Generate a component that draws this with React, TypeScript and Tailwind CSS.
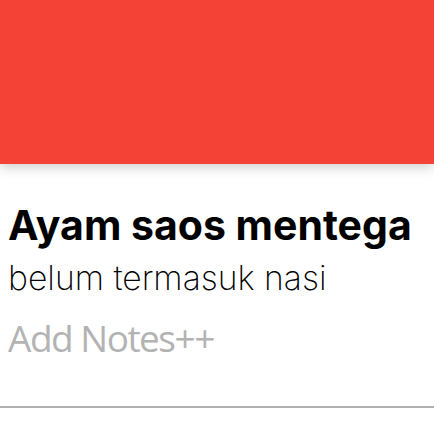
export default function App() {
  return (
    <div className="w-[434px] h-[434px] bg-white overflow-hidden">
      <div className="h-[164px] bg-[#f44336] shadow-[0_3px_12px_rgba(0,0,0,0.2)] relative z-10" />
      <div className="px-2">
        <h1 className="mt-[41px] text-[41px] leading-none font-bold text-black font-['Inter',sans-serif]">
          Ayam saos mentega
        </h1>
        <p className="mt-[15px] text-[33.7px] leading-none font-extralight text-black font-['Inter',sans-serif]">
          belum termasuk nasi
        </p>
      </div>
      <div className="mt-[24px] border-b-2 border-[#b0b0b0] pb-[50px] px-2">
        <p className="text-[37px] leading-none tracking-[-1.5px] text-[#b3b3b3] font-['Open_Sans',sans-serif]">
          Add Notes++
        </p>
      </div>
    </div>
  );
}
